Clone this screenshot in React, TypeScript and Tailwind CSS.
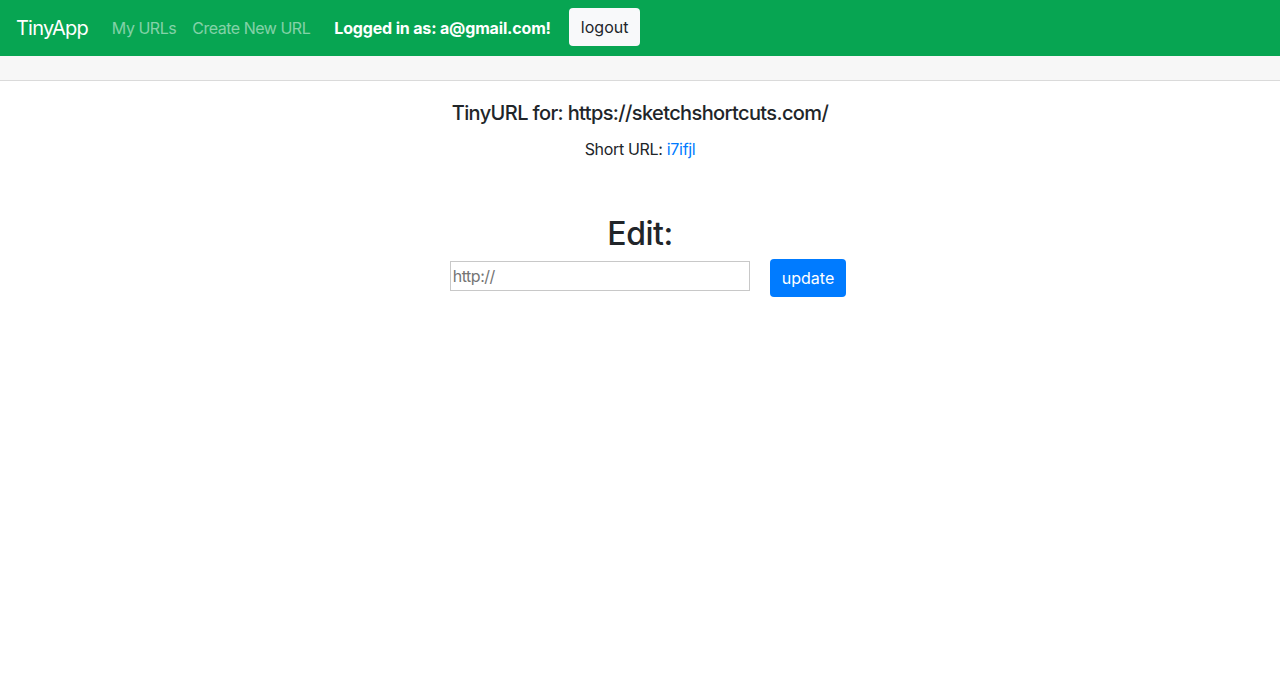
import React from "react";

export default function App() {
  return (
    <div
      className="min-h-[698px] bg-white text-[#212529] tracking-[-0.03em]"
      style={{ fontFamily: 'Inter, "Noto Sans", "Liberation Sans", sans-serif' }}
    >
      <nav className="h-[56px] bg-[#07a552] flex items-center px-4">
        <span className="text-[20px] text-white leading-[30px] mr-[24px] tracking-[-0.04em]">TinyApp</span>
        <span className="text-[16px] text-white/50 mr-[16px]">My URLs</span>
        <span className="text-[16px] text-white/50 mr-[24px]">Create New URL</span>
        <span className="text-[16px] text-white font-bold mr-[18px] tracking-[-0.01em]">Logged in as: a@gmail.com!</span>
        <button className="h-[38px] px-3 mt-[-2px] rounded bg-[#f8f9fa] text-[16px] text-[#212529] tracking-normal">logout</button>
      </nav>
      <div className="h-[25px] bg-[#f7f7f7] border-b border-[#dadada]" />
      <div className="flex flex-col items-center pt-[20px]">
        <h5 className="text-[20px] font-medium leading-[24px] tracking-[-0.031em]">TinyURL for: https://sketchshortcuts.com/</h5>
        <p className="text-[16px] leading-[24px] mt-[12px] tracking-[-0.02em]">
          Short URL: <a className="text-[#007bff]">i7ifjl</a>
        </p>
        <h2 className="text-[32px] font-medium leading-[38px] mt-[54px]">Edit:</h2>
        <div className="flex items-start gap-[20px] pl-4 mt-[6px]">
          <input
            className="w-[300px] h-[30px] mt-[2px] border border-[#c8c8c8] px-[2px] text-[16px] placeholder-[#757575] outline-none"
            placeholder="http://"
          />
          <button className="h-[38px] px-3 rounded bg-[#007bff] text-white text-[16px] tracking-normal">update</button>
        </div>
      </div>
    </div>
  );
}
